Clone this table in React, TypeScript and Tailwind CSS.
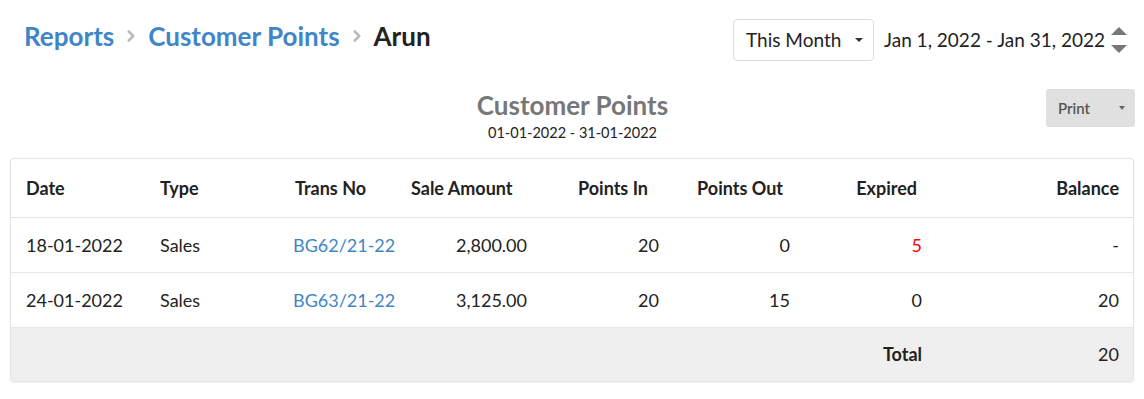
import { ChevronRight } from 'lucide-react'

const rows = [
  { date: '18-01-2022', type: 'Sales', no: 'BG62/21-22', amount: '2,800.00', pin: '20', pout: '0', expired: '5', balance: '-' },
  { date: '24-01-2022', type: 'Sales', no: 'BG63/21-22', amount: '3,125.00', pin: '20', pout: '15', expired: '0', balance: '20' },
]

export default function App() {
  return (
    <div className="min-h-[399px] bg-white text-[#222] font-['Lato','Liberation_Sans',sans-serif]">
      {/* top bar */}
      <div className="flex items-start justify-between pl-6 pr-[17px] pt-[19px]">
        <div className="flex items-center gap-[8px] text-[26px] font-bold leading-[34px]">
          <span className="text-[#3f86c8]">Reports</span>
          <ChevronRight size={18} strokeWidth={3.5} className="text-[#bbb]" />
          <span className="text-[#3f86c8]">Customer Points</span>
          <ChevronRight size={18} strokeWidth={3.5} className="text-[#bbb]" />
          <span className="text-[#222]">Arun</span>
        </div>
        <div className="flex items-center">
          <div className="flex items-center h-[42px] w-[141px] border border-[#ddd] rounded-[4px] pl-[12px] text-[19px]">
            <span>This Month</span>
            <span className="ml-[14px] w-0 h-0 border-l-[4px] border-r-[4px] border-t-[4px] border-l-transparent border-r-transparent border-t-[#333]" />
          </div>
          <span className="ml-[10px] text-[19px]">Jan 1, 2022 - Jan 31, 2022</span>
          <div className="ml-[6px] flex flex-col gap-[10px]">
            <span className="w-0 h-0 border-l-[8px] border-r-[8px] border-b-[8px] border-l-transparent border-r-transparent border-b-[#777]" />
            <span className="w-0 h-0 border-l-[8px] border-r-[8px] border-t-[8px] border-l-transparent border-r-transparent border-t-[#777]" />
          </div>
        </div>
      </div>

      {/* report title */}
      <div className="relative mt-[28px] px-[10px]">
        <div className="flex flex-col items-center pl-[1px]">
          <h1 className="text-[26px] font-bold text-[#777] leading-[30px] mt-[1px]">Customer Points</h1>
          <p className="text-[14.5px] leading-[18px] mt-[4px]">01-01-2022 - 31-01-2022</p>
        </div>
        <button className="absolute right-[9px] top-0 flex items-center h-[38px] w-[89px] rounded-[3px] bg-[#e0e0e0] pl-[12px] text-[15px] font-semibold text-[#555]">
          Print
          <span className="ml-[29px] w-0 h-0 border-l-[3.5px] border-r-[3.5px] border-t-[4px] border-l-transparent border-r-transparent border-t-[#666]" />
        </button>
      </div>

      {/* table */}
      <div className="mx-[10px] mt-[16px] border border-[#e3e3e3] rounded-[4px] shadow-[0_1px_2px_rgba(0,0,0,0.06)] text-[18px]">
        <div className="flex items-center h-[59px] pl-[15px] pr-[14px] font-bold border-b border-[#e3e3e3]">
          <div className="w-[134px]">Date</div>
          <div className="w-[135px]">Type</div>
          <div className="w-[116px]">Trans No</div>
          <div className="w-[103px] whitespace-nowrap">Sale Amount</div>
          <div className="w-[134px] text-right">Points In</div>
          <div className="w-[135px] text-right">Points Out</div>
          <div className="w-[134px] text-right">Expired</div>
          <div className="flex-1 text-right">Balance</div>
        </div>
        {rows.map((r) => (
          <div key={r.no} className="flex items-center h-[55px] pl-[15px] pr-[14px] border-b border-[#e8e8e8]">
            <div className="w-[134px]">{r.date}</div>
            <div className="w-[133px]">{r.type}</div>
            <div className="w-[107px] text-[#3f86c8]">{r.no}</div>
            <div className="w-[127px] text-right">{r.amount}</div>
            <div className="w-[132px] text-right">{r.pin}</div>
            <div className="w-[131px] text-right">{r.pout}</div>
            <div className={`w-[132px] text-right ${r.expired === '5' ? 'text-[#f00]' : ''}`}>{r.expired}</div>
            <div className="flex-1 text-right">{r.balance}</div>
          </div>
        ))}
        <div className="flex items-center h-[53px] pl-[15px] pr-[14px] bg-[#efefef] rounded-b-[4px]">
          <div className="w-[896px] text-right font-bold">Total</div>
          <div className="flex-1 text-right">20</div>
        </div>
      </div>
    </div>
  )
}
